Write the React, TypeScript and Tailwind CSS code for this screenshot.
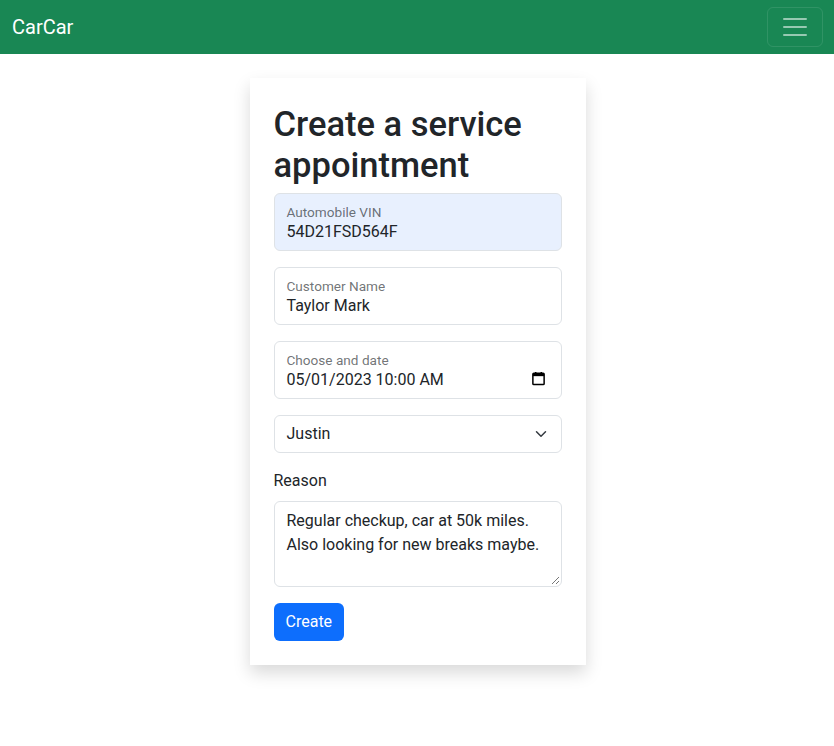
import React from "react";

const font = { fontFamily: 'Roboto, "Segoe UI", sans-serif' };

function FloatingField({ label, value, bg, children }: { label: string; value: string; bg?: string; children?: React.ReactNode }) {
    return (
        <div className={`relative h-[58px] rounded-[6px] border border-[#dee2e6] mb-4 ${bg ?? "bg-white"}`}>
            <div className="absolute left-[12px] top-[8px] text-[13.6px] leading-[20px] text-[#212529a6]">{label}</div>
            <div className="absolute left-[12px] top-[26px] text-[16px] leading-[24px] text-[#212529]">{value}</div>
            {children}
        </div>
    );
}

export default function App() {
    return (
        <div className="min-h-[746px] bg-white" style={font}>
            <nav className="flex h-[54px] items-center justify-between bg-[#198754] pl-3 pr-[11px]">
                <span className="text-[20px] leading-[30px] text-white">CarCar</span>
                <button className="flex h-[40px] w-[56px] items-center justify-center rounded-[6px] border border-[#ffffff1a]">
                    <svg width="30" height="30" viewBox="0 0 30 30">
                        <path d="M4 7h22M4 15h22M4 23h22" stroke="rgba(255,255,255,0.55)" strokeWidth="2" strokeLinecap="round" />
                    </svg>
                </button>
            </nav>

            <div className="flex justify-center pt-6">
                <div className="w-[336px] ml-[1px] bg-white p-6 shadow-[0_8px_16px_rgba(0,0,0,0.15)]">
                    <h1 className="mb-[6px] pt-[2px] text-[34.5px] font-medium leading-[41.4px] text-[#212529]">
                        Create a service appointment
                    </h1>

                    <FloatingField label="Automobile VIN" value="54D21FSD564F" bg="bg-[#e8f0fe]" />
                    <FloatingField label="Customer Name" value="Taylor Mark" />
                    <FloatingField label="Choose and date" value="05/01/2023 10:00  AM">
                        <svg className="absolute right-[15px] top-[29px]" width="15" height="15" viewBox="0 0 16 16">
                            <rect x="2" y="2.5" width="12" height="12" rx="1" fill="none" stroke="#000" strokeWidth="1.6" />
                            <rect x="2" y="2.5" width="12" height="3" fill="#000" />
                            <path d="M5 1v2.5M11 1v2.5" stroke="#000" strokeWidth="1.6" />
                        </svg>
                    </FloatingField>

                    <div className="relative mb-4 flex h-[38px] items-center rounded-[6px] border border-[#dee2e6] px-3 pt-[1px] text-[16px] leading-[24px] text-[#212529]">
                        Justin
                        <svg className="absolute right-[14px] top-[12px]" width="12" height="12" viewBox="0 0 16 16">
                            <path d="m2 5 6 6 6-6" fill="none" stroke="#343a40" strokeWidth="2" strokeLinecap="round" strokeLinejoin="round" />
                        </svg>
                    </div>

                    <div className="mb-2 pt-[1px] h-[24px] box-content -mt-[1px] text-[16px] leading-[24px] text-[#212529]">Reason</div>
                    <div className="relative mb-4 h-[86px] rounded-[6px] border border-[#dee2e6] px-3 pt-[7px] text-[16px] leading-[24px] text-[#212529]">
                        <div>Regular checkup, car at 50k miles.</div>
                        <div>Also looking for new breaks maybe.</div>
                        <svg className="absolute bottom-[1px] right-[1px]" width="9" height="9" viewBox="0 0 9 9">
                            <path d="M8 1 1 8M8 5 5 8" stroke="#777" strokeWidth="1" />
                        </svg>
                    </div>

                    <button className="h-[38px] rounded-[6px] bg-[#0d6efd] px-3 pt-[1px] text-[16px] leading-[24px] text-white">
                        Create
                    </button>
                </div>
            </div>
        </div>
    );
}
